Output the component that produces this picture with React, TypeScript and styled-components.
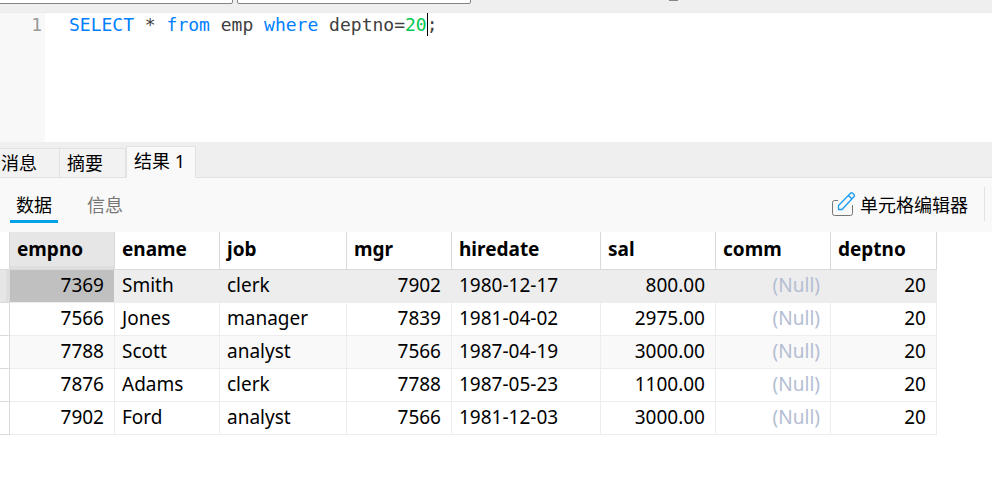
import React from "react";
import styled, { createGlobalStyle } from "styled-components";

const GlobalStyle = createGlobalStyle`
  *, *::before, *::after { box-sizing: border-box; }
  body {
    margin: 0;
    background: #fff;
    color: #000;
    font-family: "Noto Sans", "Noto Sans CJK SC", sans-serif;
    font-size: 19px;
  }
  button, select { font: inherit; color: inherit; }
`;

const Page = styled.main`
  min-height: 100vh;
  background: #fff;
  overflow: hidden;
`;

const ConnectionBar = styled.header`
  display: flex;
  align-items: flex-end;
  gap: 4px;
  height: 13px;
  padding-bottom: 8px;
  overflow: hidden;
  background: #efefef;
  border-bottom: 1px solid #ebebeb;
`;

const Picker = styled.select<{ $first?: boolean }>`
  appearance: none;
  flex: none;
  width: ${(p) => (p.$first ? 236 : 234)}px;
  margin-left: ${(p) => (p.$first ? -3 : 0)}px;
  height: 30px;
  background: #fff;
  border: 1px solid #858585;
  border-radius: 2px;
`;

const StopMark = styled.span`
  width: 9px;
  height: 1px;
  margin: 0 0 3px 194px;
  background: #858585;
`;

const Editor = styled.section`
  display: flex;
  height: 129px;
  font-family: "DejaVu Sans Mono", monospace;
  font-size: 18px;
  line-height: 24px;
`;

const Gutter = styled.div`
  flex: none;
  width: 45px;
  padding-right: 3px;
  text-align: right;
  color: #999;
  background: #f8f8f8;
`;

const Code = styled.pre`
  flex: 1;
  margin: 0;
  padding-left: 24px;
  font: inherit;
  color: #404040;
  outline: none;
`;

const Keyword = styled.span`
  color: #0080ff;
`;

const NumberToken = styled.span`
  color: #00c850;
`;

const Caret = styled.span`
  display: inline-block;
  width: 1px;
  height: 23px;
  margin-right: -1px;
  vertical-align: top;
  background: #000;
`;

const ResultTabs = styled.div`
  display: flex;
  align-items: flex-end;
  height: 36px;
  background: #efefef;
  box-shadow: inset 0 -1px #e2e2e2;
`;

const ResultTab = styled.button<{ $active?: boolean }>`
  height: ${(p) => (p.$active ? 32 : 30)}px;
  padding: 0 ${(p) => (p.$active ? 10 : 22)}px ${(p) => (p.$active ? 2 : 0)}px 7px;
  border: 1px solid #e2e2e2;
  border-left-width: ${(p) => (p.$active ? 1 : 0)}px;
  border-bottom-color: ${(p) => (p.$active ? "#f9f9f9" : "#e2e2e2")};
  background: ${(p) => (p.$active ? "#f9f9f9" : "#f2f2f2")};
  font-size: 18px;
  line-height: 28px;
  white-space: nowrap;

  &:first-child { padding-left: 1px; }
`;

const ViewBar = styled.div`
  display: flex;
  align-items: flex-start;
  height: 54px;
  padding: 9px 7px 0 10px;
  background: #f9f9f9;
`;

const ViewTab = styled.button<{ $active?: boolean }>`
  height: 36px;
  padding: 4px 6px 0;
  margin-right: 23px;
  border: 0;
  border-bottom: 3px solid ${(p) => (p.$active ? "#00a2e8" : "transparent")};
  background: none;
  color: ${(p) => (p.$active ? "#000" : "#777")};
  font-size: 18px;
  line-height: 29px;
`;

const CellEditorButton = styled.button`
  display: flex;
  align-items: center;
  gap: 5px;
  height: 34px;
  margin-left: auto;
  padding: 0 16px 0 0;
  border: 0;
  border-right: 1px solid #e2e2e2;
  background: none;
  font-size: 18px;
`;

const Grid = styled.table`
  width: 937px;
  table-layout: fixed;
  border-collapse: separate;
  border-spacing: 0;
  line-height: 24px;
`;

const Column = styled.col<{ $width: number }>`
  width: ${(p) => p.$width}px;
`;

const HeadCell = styled.th<{ $selected?: boolean }>`
  height: 38px;
  padding: 0 7px 3px;
  text-align: left;
  font-weight: 700;
  border-right: 1px solid #dadada;
  border-bottom: 1px solid #dadada;
  background: ${(p) => (p.$selected ? "#e6e6e6" : "#fff")};
  box-shadow: ${(p) => (p.$selected ? "inset 0 -3px #dedede" : "none")};
`;

const Row = styled.tr<{ $current?: boolean }>`
  background: ${(p) => (p.$current ? "#ededed" : "#fff")};
  &:nth-child(odd) { background: ${(p) => (p.$current ? "#ededed" : "#f9f9f9")}; }
  &:last-child { background: #fff; }
`;

const RowMarker = styled.td<{ $current?: boolean }>`
  height: 33px;
  padding: 0;
  border-right: 1px solid #dadada;
  border-bottom: 1px solid #dadada;
  background: ${(p) => (p.$current ? "#e6e6e6" : "#fff")};
  box-shadow: ${(p) => (p.$current ? "inset -3px 0 #dedede" : "none")};
`;

const Cell = styled.td<{ $right?: boolean; $selected?: boolean; $empty?: boolean }>`
  height: 33px;
  padding: 0 10px 2px 7px;
  text-align: ${(p) => (p.$right ? "right" : "left")};
  border-right: 1px solid #ededed;
  border-bottom: 1px solid #ededed;
  color: ${(p) => (p.$empty ? "#b4bdd3" : "#000")};
  background: ${(p) => (p.$selected ? "#c0c0c0" : "transparent")};
`;

const columns = [
  { name: "empno", width: 105, right: true },
  { name: "ename", width: 105 },
  { name: "job", width: 127 },
  { name: "mgr", width: 105, right: true },
  { name: "hiredate", width: 149 },
  { name: "sal", width: 115, right: true },
  { name: "comm", width: 115, right: true },
  { name: "deptno", width: 106, right: true },
];

const rows: (string | null)[][] = [
  ["7369", "Smith", "clerk", "7902", "1980-12-17", "800.00", null, "20"],
  ["7566", "Jones", "manager", "7839", "1981-04-02", "2975.00", null, "20"],
  ["7788", "Scott", "analyst", "7566", "1987-04-19", "3000.00", null, "20"],
  ["7876", "Adams", "clerk", "7788", "1987-05-23", "1100.00", null, "20"],
  ["7902", "Ford", "analyst", "7566", "1981-12-03", "3000.00", null, "20"],
];

function EditIcon() {
  return (
    <svg width="23" height="24" viewBox="0 0 23 24" fill="none" aria-hidden="true">
      <path d="M6 8.5H2.5a2 2 0 0 0-2 2v11a2 2 0 0 0 2 2h16a2 2 0 0 0 2-2V13" stroke="#777777" />
      <path d="M6.5 17.5v-4L18.5 1.3a1.6 1.6 0 0 1 2.2 0l1.2 1.2a1.6 1.6 0 0 1 0 2.2L10 17.5zM16.5 3.5l3.5 3.5" stroke="#1b9cf2" strokeWidth="1.3" />
    </svg>
  );
}

export default function App() {
  return (
    <Page>
      <GlobalStyle />
      <ConnectionBar>
        <Picker $first aria-label="Connection" />
        <Picker aria-label="Database" />
        <StopMark />
      </ConnectionBar>
      <Editor>
        <Gutter>1</Gutter>
        <Code role="textbox" aria-label="SQL" contentEditable suppressContentEditableWarning spellCheck={false}>
          <Keyword>SELECT</Keyword> * <Keyword>from</Keyword> emp <Keyword>where</Keyword> deptno=
          <NumberToken>20</NumberToken>
          <Caret />;
        </Code>
      </Editor>
      <ResultTabs role="tablist">
        <ResultTab role="tab">消息</ResultTab>
        <ResultTab role="tab">摘要</ResultTab>
        <ResultTab role="tab" aria-selected $active>结果 1</ResultTab>
      </ResultTabs>
      <ViewBar>
        <ViewTab $active>数据</ViewTab>
        <ViewTab>信息</ViewTab>
        <CellEditorButton>
          <EditIcon />
          单元格编辑器
        </CellEditorButton>
      </ViewBar>
      <Grid>
        <colgroup>
          <Column $width={10} />
          {columns.map((c) => (
            <Column key={c.name} $width={c.width} />
          ))}
        </colgroup>
        <thead>
          <tr>
            <HeadCell as="td" />
            {columns.map((c, i) => (
              <HeadCell key={c.name} scope="col" $selected={i === 0}>{c.name}</HeadCell>
            ))}
          </tr>
        </thead>
        <tbody>
          {rows.map((row, r) => (
            <Row key={row[0]} $current={r === 0}>
              <RowMarker $current={r === 0} />
              {row.map((value, i) => (
                <Cell key={columns[i].name} $right={columns[i].right} $selected={r === 0 && i === 0} $empty={value === null}>
                  {value ?? "(Null)"}
                </Cell>
              ))}
            </Row>
          ))}
        </tbody>
      </Grid>
    </Page>
  );
}
